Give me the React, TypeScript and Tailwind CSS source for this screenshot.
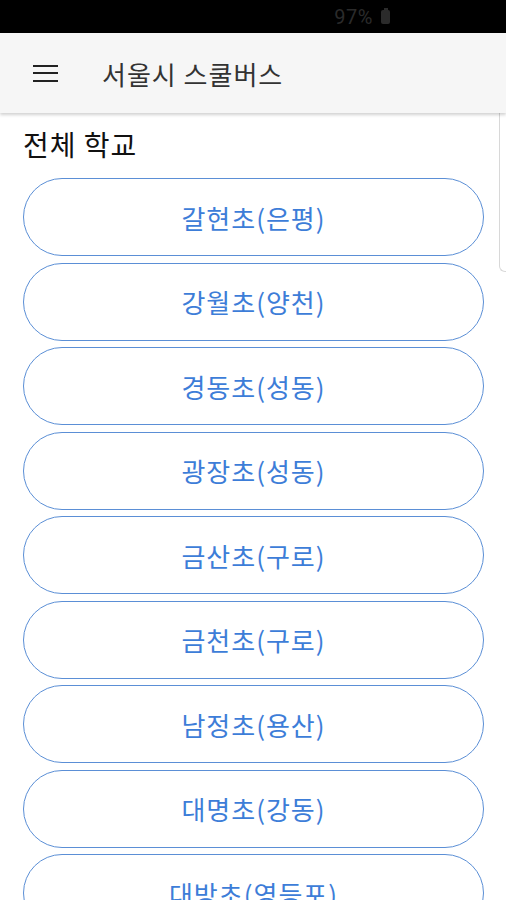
import { useState } from 'react';

const schools = [
    '갈현초(은평)',
    '강월초(양천)',
    '경동초(성동)',
    '광장초(성동)',
    '금산초(구로)',
    '금천초(구로)',
    '남정초(용산)',
    '대명초(강동)',
    '대방초(영등포)',
    '대청초(강남)',
];

const font = { fontFamily: '"Noto Sans CJK KR", "Noto Sans", sans-serif' };

const App = () => {
    const [selected, setSelected] = useState<string | null>(null);

    return (
        <div className="relative w-[506px] h-[900px] overflow-hidden bg-white" style={font}>
            {/* status bar */}
            <div className="h-[33px] bg-black flex items-center justify-end pr-[116px] gap-[8px]">
                <span className="text-[20px] text-[#2b2b2b] leading-none tracking-[0.5px]" style={{ fontFamily: 'Roboto, sans-serif' }}>97%</span>
                <div className="relative w-[9px] h-[14px] bg-[#2b2b2b] rounded-[2px]">
                    <div className="absolute -top-[2px] left-[2.5px] w-[4px] h-[2px] bg-[#2b2b2b]" />
                </div>
            </div>

            {/* app bar */}
            <div className="relative z-10 h-[80px] bg-[#f6f6f6] flex items-center shadow-[0_2px_3px_rgba(0,0,0,0.18)]">
                <div className="ml-[33px] w-[25px] flex flex-col gap-[5.5px]">
                    <div className="h-[2px] bg-[#222]" />
                    <div className="h-[2px] bg-[#222]" />
                    <div className="h-[2px] bg-[#222]" />
                </div>
                <div className="ml-[44px] text-[26px] text-[#333] tracking-[1px]">서울시 스쿨버스</div>
            </div>

            {/* edge handle */}
            <div className="absolute right-0 top-[104px] w-[7px] h-[168px] border border-r-0 border-[#d8d8d8] rounded-l-[6px] bg-white" />

            {/* content */}
            <div className="px-[23px] pr-[22px]">
                <div className="pt-[14px] pb-[17px] text-[28px] leading-[34px] text-[#111] tracking-[1px]">전체 학교</div>
                <div className="flex flex-col gap-[6.5px]">
                    {schools.map((name) => (
                        <button
                            key={name}
                            onClick={() => setSelected(name)}
                            className={`h-[78px] w-full rounded-full border-[1.5px] border-[#5b8fd6] flex items-center justify-center text-[26px] text-[#3d7dd8] tracking-[1px] ${selected === name ? 'bg-[#eef4fc]' : 'bg-white'}`}
                            style={font}
                        >
                            {name}
                        </button>
                    ))}
                </div>
            </div>
        </div>
    );
};

export default App;
